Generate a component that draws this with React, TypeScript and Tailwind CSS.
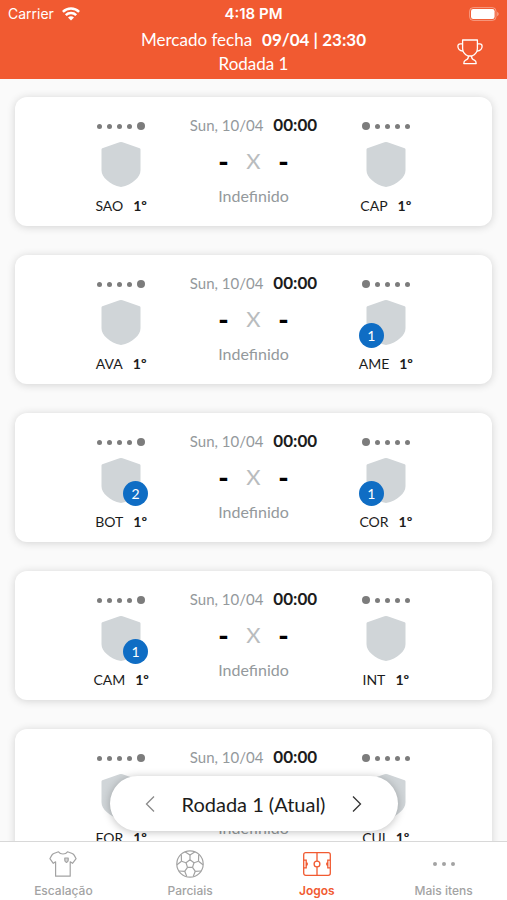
import type { ReactNode } from 'react'
import clsx from 'clsx'

type Team = {
  name: string
  position: string
  players?: number
}

type Match = {
  home: Team
  away: Team
}

const matches: Match[] = [
  { home: { name: 'SAO', position: '1º' }, away: { name: 'CAP', position: '1º' } },
  { home: { name: 'AVA', position: '1º' }, away: { name: 'AME', position: '1º', players: 1 } },
  { home: { name: 'BOT', position: '1º', players: 2 }, away: { name: 'COR', position: '1º', players: 1 } },
  { home: { name: 'CAM', position: '1º', players: 1 }, away: { name: 'INT', position: '1º' } },
  { home: { name: 'FOR', position: '1º' }, away: { name: 'CUI', position: '1º' } },
]

function WifiIcon() {
  return (
    <svg viewBox="0 0 18 14" className="h-[14px] w-[18px]" fill="none" stroke="currentColor" strokeWidth="2.5" aria-hidden="true">
      <path d="M.9 4.9a11.6 11.6 0 0 1 16.2 0" />
      <path d="M3.8 8.1a7.4 7.4 0 0 1 10.4 0" />
      <path d="M9 13.6 6 10.6a4.3 4.3 0 0 1 6 0z" fill="currentColor" stroke="none" />
    </svg>
  )
}

function BatteryIcon() {
  return (
    <svg viewBox="0 0 30 14" className="h-[14px] w-[30px]" aria-hidden="true">
      <rect x=".6" y=".6" width="26.4" height="12.8" rx="3.6" fill="none" stroke="#fff" strokeOpacity=".4" />
      <rect x="2" y="2" width="23.6" height="10" rx="2.2" fill="#fff" />
      <path d="M28.2 4.8c1.9.8 1.9 3.6 0 4.4z" fill="#fff" fillOpacity=".45" />
    </svg>
  )
}

function TrophyIcon() {
  return (
    <svg viewBox="0 0 26 26" className="size-[26px]" fill="none" stroke="currentColor" strokeWidth="1.3" strokeLinejoin="round" aria-hidden="true">
      <path d="M5.6 1h14.8v8.6c0 3.7-2.4 6.2-5.6 7.4h-3.6c-3.2-1.2-5.6-3.7-5.6-7.4z" />
      <path d="M5.6 4.8H3.2C1.7 4.8.9 5.7.9 7.2c0 2.7 2 4.6 5.2 5" />
      <path d="M20.4 4.8h2.4c1.500 0 2.300.9 2.300 2.400 0 2.700-2 4.600-5.200 5" />
      <path d="M11.300 17c.3 2-.6 3.400-2.700 4.200-1.200.5-1.800 1.500-1.800 3.400h12.400c0-1.900-.6-2.900-1.800-3.400-2.100-.8-3-2.200-2.700-4.200" />
    </svg>
  )
}

function ShirtIcon() {
  return (
    <svg viewBox="0 0 28 28" className="size-7" fill="none" stroke="currentColor" strokeWidth="1.200" strokeLinejoin="round" aria-hidden="true">
      <path d="M9.500 1.800c1 1.500 2.600 2.200 4.500 2.200s3.500-.7 4.500-2.200l4.700 1.700c1 .4 1.600 1 2.100 1.900l1.800 3.300-3.600 4.600-2.300-1.500v14.400H6.600V11.800l-2.300 1.500L.9 8.700l1.800-3.300c.5-.9 1.100-1.500 2.100-1.900z" />
      <path d="M15.800 8h3.400v2.300c0 1-.7 1.700-1.700 2.200-1-.5-1.700-1.200-1.700-2.200z" fill="currentColor" fillOpacity=".45" />
    </svg>
  )
}

function BallIcon() {
  return (
    <svg viewBox="0 0 28 28" className="size-7" fill="none" stroke="currentColor" strokeWidth="1.200" strokeLinejoin="round" aria-hidden="true">
      <circle cx="14" cy="14" r="13.200" />
      <path d="m14 9.800 4 2.900-1.500 4.700h-5L10 12.700z" />
      <path d="M14 9.800V5M18 12.700l4.500-1.500M16.500 17.400l2.800 3.900M11.500 17.400l-2.800 3.900M10 12.700l-4.500-1.500" />
      <path d="M14 5 9.300 1.900M14 5l4.700-3.100M9.300 1.900l1.200 1M5.500 11.200 1 14.800M5.500 11.200 5.300 4.600M22.500 11.200l.2-6.600M22.500 11.200l4.500 3.600" />
      <path d="m8.700 21.300-5.800-.3M8.700 21.300l2.100 5.200M19.300 21.300l5.800-.3M19.300 21.300l-2.100 5.200" />
    </svg>
  )
}

function PitchIcon() {
  return (
    <svg viewBox="0 0 28 28" className="size-7" fill="none" stroke="currentColor" strokeWidth="1.300" aria-hidden="true">
      <rect x=".7" y="2.700" width="26.600" height="22.600" rx="2" />
      <path d="M14 2.700v8.400M14 16.900v8.400" />
      <circle cx="14" cy="14" r="2.900" />
      <path d="M.7 10.200h2.500v7.600H.7M3.200 12.400c1.500.6 1.500 2.600 0 3.200M27.300 10.200h-2.500v7.600h2.500M24.800 12.400c-1.500.6-1.500 2.600 0 3.200" />
    </svg>
  )
}

function MoreIcon() {
  return (
    <svg viewBox="0 0 28 28" className="size-7" fill="currentColor" aria-hidden="true">
      <circle cx="5" cy="14" r="2" />
      <circle cx="14" cy="14" r="2" />
      <circle cx="23" cy="14" r="2" />
    </svg>
  )
}

function Chevron({ direction }: { direction: 'left' | 'right' }) {
  return (
    <svg viewBox="0 0 10 18" className="h-[18px] w-[10px]" fill="none" stroke="currentColor" strokeWidth="1.300" aria-hidden="true">
      <path d={direction === 'left' ? 'M9 1.500 1.500 9 9 16.500' : 'M1 1.500 8.500 9 1 16.500'} />
    </svg>
  )
}

// Last five results, the most recent one is the bigger dot
function Form({ side }: { side: 'home' | 'away' }) {
  return (
    <div className={clsx('flex h-2 items-center gap-[5px]', side === 'away' && 'flex-row-reverse')}>
      {[1, 2, 3, 4].map((i) => (
        <span key={i} className="size-[5px] rounded-full bg-[#7c7c7c]" />
      ))}
      <span className="size-2 rounded-full bg-[#7c7c7c]" />
    </div>
  )
}

function TeamColumn({ team, side }: { team: Team; side: 'home' | 'away' }) {
  return (
    <div className="flex flex-col items-center pt-[9px]">
      <Form side={side} />
      <div className="relative mt-3">
        <svg viewBox="0 0 40 45" className="h-[45px] w-10" aria-hidden="true">
          <path d="M20 0c1 0 2 .4 3 .8l15.700 5.500c.6.200.8.500.8 1.100v20.800c0 4-2 6.800-5.500 10-3.500 3.300-8 6-14 6.800-6-.8-10.500-3.500-14-6.800C2.500 35 .5 32.200.5 28.200V7.400c0-.6.200-.9.8-1.100L17 .8c1-.4 2-.8 3-.8z" fill="#d0d5d8" />
        </svg>
        {team.players && (
          <span
            className={clsx(
              'absolute -bottom-[3px] flex size-[25px] items-center justify-center rounded-full bg-[#0f6dc4] text-sm text-white',
              side === 'home' ? '-right-[7px]' : '-left-[7px]',
            )}
          >
            {team.players}
          </span>
        )}
      </div>
      <div className="mt-[9px] flex gap-[10px] text-sm leading-5 text-[#1c1c1c]">
        <span>{team.name}</span>
        <span className="font-bold">{team.position}</span>
      </div>
    </div>
  )
}

function MatchCard({ match }: { match: Match }) {
  return (
    <li className="grid shrink-0 grid-cols-3 rounded-xl bg-white px-10 pt-4 pb-[10px] shadow-[0_1px_8px_rgba(0,0,0,0.16)]">
      <TeamColumn team={match.home} side="home" />
      <div className="flex flex-col items-center whitespace-nowrap">
        <p className="flex gap-[10px] text-[15px] leading-6 text-[#94999c]">
          <span>Sun, 10/04</span>
          <strong className="text-[17px] font-bold text-[#1c1c1c]">00:00</strong>
        </p>
        <p className="mt-3 flex items-center gap-3 leading-6">
          <span className="w-3 text-center text-[28px] leading-6 font-black text-black">-</span>
          <span className="w-6 text-center text-[22px] leading-6 text-[#b9bcbe]">X</span>
          <span className="w-3 text-center text-[28px] leading-6 font-black text-black">-</span>
        </p>
        <p className="mt-[11px] text-base leading-6 text-[#94999c]">Indefinido</p>
      </div>
      <TeamColumn team={match.away} side="away" />
    </li>
  )
}

function Tab({ icon, label, active }: { icon: ReactNode; label: string; active?: boolean }) {
  return (
    <a
      href="#"
      aria-current={active ? 'page' : undefined}
      className={clsx(
        'flex flex-1 flex-col items-center gap-[5px] pt-2 pb-[1px]',
        active ? 'font-semibold text-[#f15a31]' : 'font-medium text-[#a3a3a3]',
      )}
    >
      {icon}
      <span className="text-xs leading-4">{label}</span>
    </a>
  )
}

export default function App() {
  return (
    <div className="flex h-screen flex-col overflow-hidden bg-[#fafafa] font-['Lato',sans-serif]">
      <header className="relative bg-[#f15a31] pb-[3px] text-white">
        <div className="grid h-7 grid-cols-3 items-center px-2 font-['Inter',sans-serif] text-sm">
          <div className="flex items-center gap-2">
            <span>Carrier</span>
            <WifiIcon />
          </div>
          <span className="text-center text-[15px] font-semibold">4:18 PM</span>
          <div className="flex justify-end">
            <BatteryIcon />
          </div>
        </div>
        <p className="flex justify-center gap-[10px] text-[17px] leading-6">
          <span>Mercado fecha</span>
          <strong className="font-bold">09/04 | 23:30</strong>
        </p>
        <p className="text-center text-[17px] leading-6">Rodada 1</p>
        <button type="button" aria-label="Ligas" className="absolute right-6 bottom-[14px]">
          <TrophyIcon />
        </button>
      </header>

      <main className="relative min-h-0 flex-1">
        <ul className="flex h-full flex-col gap-[29px] overflow-hidden px-[15px] pt-[18px]">
          {matches.map((match) => (
            <MatchCard key={match.home.name} match={match} />
          ))}
        </ul>
        <div className="absolute inset-x-0 bottom-[10px] mx-auto flex h-[55px] w-72 items-center justify-between rounded-full bg-white px-[35px] shadow-[0_1px_8px_rgba(0,0,0,0.25)]">
          <button type="button" aria-label="Rodada anterior" className="text-[#8a8a8a]">
            <Chevron direction="left" />
          </button>
          <span className="text-xl text-[#1c1c1c]">Rodada 1 (Atual)</span>
          <button type="button" aria-label="Próxima rodada" className="text-[#333333]">
            <Chevron direction="right" />
          </button>
        </div>
      </main>

      <nav className="flex border-t border-[#d8d8d8] bg-white font-['Inter',sans-serif]">
        <Tab icon={<ShirtIcon />} label="Escalação" />
        <Tab icon={<BallIcon />} label="Parciais" />
        <Tab icon={<PitchIcon />} label="Jogos" active />
        <Tab icon={<MoreIcon />} label="Mais itens" />
      </nav>
    </div>
  )
}
